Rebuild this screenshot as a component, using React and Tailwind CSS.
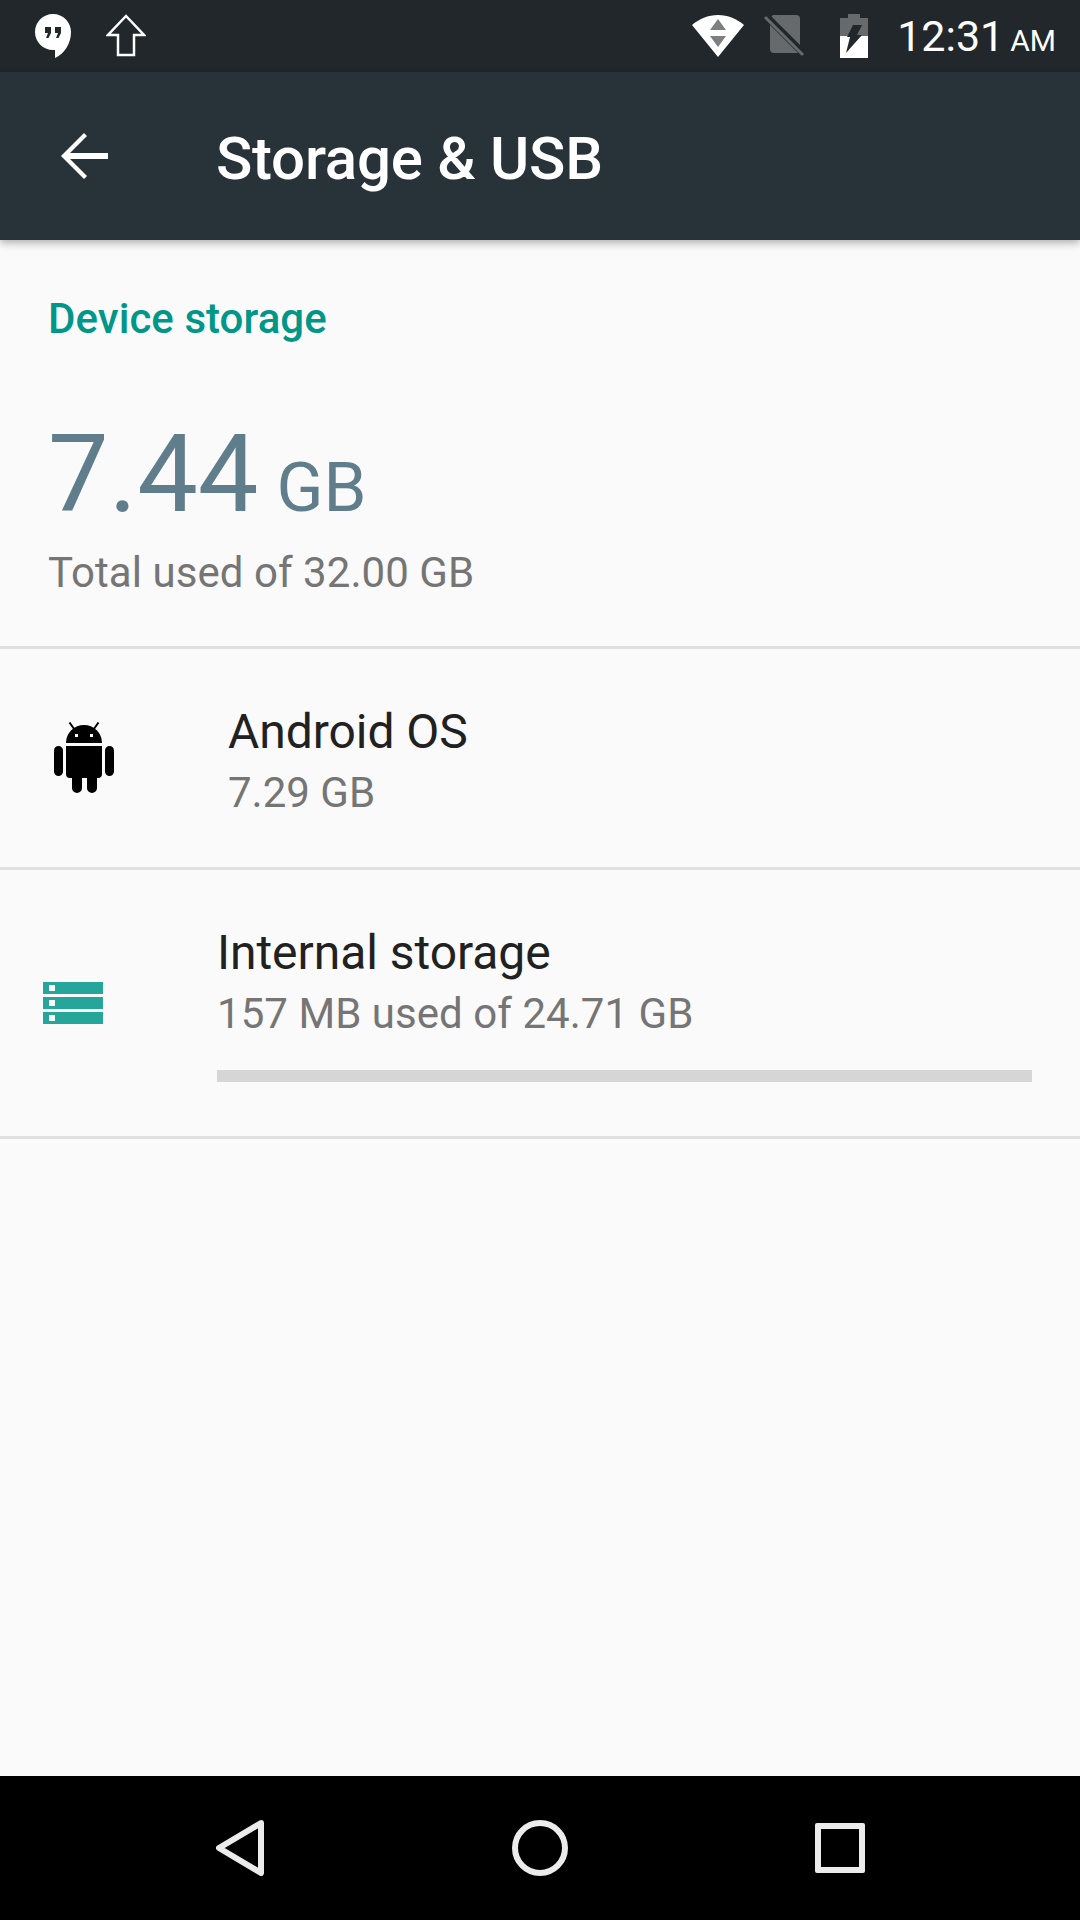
const HangoutsIcon = () => (
  <svg width="38" height="46" viewBox="0 0 38 46" className="ml-[34px]">
    <path d="M19 1C9 1 1 9 1 19s8 18 18 18h2v8c9-4 16-14 16-26C37 9 29 1 19 1z" fill="#fff" />
    <path d="M11 14h6v6l-2.500 5h-2.500l2-5h-3zM21 14h6v6l-2.500 5h-2.500l2-5h-3z" fill="#21272b" />
  </svg>
);

const UploadIcon = () => (
  <svg width="40" height="44" viewBox="0 0 40 44" className="ml-[34px]">
    <path d="M20 2L2 21h10v20h16V21h10z" fill="none" stroke="#fff" strokeWidth="2.500" />
  </svg>
);

const WifiIcon = () => (
  <svg width="54" height="44" viewBox="0 0 54 44">
    <path d="M27 43L1 11C8 5 17 1 27 1s19 4 26 10z" fill="#fff" />
    <path d="M27 5l-8 11h16zM19 22l8 11 8-11z" fill="#7d7f80" />
  </svg>
);

const NoSimIcon = () => (
  <svg width="42" height="44" viewBox="0 0 42 44">
    <path d="M10 1h23a4 4 0 0 1 4 4v34H11a4 4 0 0 1-4-4V4z" fill="#666a6c" />
    <path d="M3 2l38 38" stroke="#21272b" strokeWidth="7" />
    <path d="M2 3l38 38" stroke="#666a6c" strokeWidth="3" />
  </svg>
);

const BatteryIcon = () => (
  <svg width="30" height="44" viewBox="0 0 30 44">
    <path d="M9 0h12v4h8v22H1V4h8z" fill="#666a6c" />
    <path d="M1 22h28v22H1z" fill="#fff" />
    <path d="M14 11h9l-5 10h5L7 39l4-16H8z" fill="#21272b" />
  </svg>
);

const BackArrow = () => (
  <svg width="48" height="48" viewBox="0 0 48 48" className="ml-[60px] shrink-0">
    <path d="M48 21H10L27 4l-3-3L1 24l23 23 3-3L10 27h38z" fill="#fff" />
  </svg>
);

const AndroidIcon = () => (
  <svg width="60" height="72" viewBox="0 0 60 72" className="ml-[54px] shrink-0">
    <path d="M12 24h36v28a4 4 0 0 1-4 4h-1v10a5 5 0 0 1-10 0V56h-5v10a5 5 0 0 1-10 0V56h-2a4 4 0 0 1-4-4z" fill="#000" />
    <path d="M0 28.500a4.500 4.500 0 0 1 9 0v21a4.500 4.500 0 0 1-9 0zM51 28.500a4.500 4.500 0 0 1 9 0v21a4.500 4.500 0 0 1-9 0z" fill="#000" />
    <path d="M12 21a18 18 0 0 1 36 0z" fill="#000" />
    <path d="M15.500 0.500l5 7M44.500 0.500l-5 7" stroke="#000" strokeWidth="2" />
    <rect x="21" y="12" width="3" height="3" fill="#fff" />
    <rect x="36" y="12" width="3" height="3" fill="#fff" />
  </svg>
);

const StorageIcon = () => (
  <div className="ml-[43px] flex w-[60px] shrink-0 flex-col gap-[3px]">
    {[0, 1, 2].map((i) => (
      <div key={i} className="flex h-[12px] items-center bg-[#26a69a] pl-[6px]">
        <div className="h-[6px] w-[6px] bg-[#fafafa]" />
      </div>
    ))}
  </div>
);

const Divider = () => <div className="h-[3px] bg-[#e0e0e0]" />;

const App = () => {
  return (
    <div
      className="flex h-[1920px] w-[1080px] flex-col overflow-hidden bg-[#fafafa]"
      style={{ fontFamily: "Roboto, sans-serif" }}
    >
      <div className="flex h-[72px] shrink-0 items-center bg-[#21272b]">
        <HangoutsIcon />
        <UploadIcon />
        <div className="ml-auto flex items-center gap-[18px]">
          <WifiIcon />
          <NoSimIcon />
          <div className="ml-[16px]">
            <BatteryIcon />
          </div>
        </div>
        <div className="mr-[24px] ml-[28px] flex items-baseline text-white">
          <span className="text-[43px]">12:31</span>
          <span className="ml-[6px] text-[30px]">AM</span>
        </div>
      </div>

      <div className="relative z-10 flex h-[168px] shrink-0 items-center bg-[#283339] shadow-[0_3px_8px_rgba(0,0,0,0.3)]">
        <BackArrow />
        <h1 className="mt-[5px] ml-[108px] text-[60px] font-medium tracking-[-0.25px] text-white">Storage &amp; USB</h1>
      </div>

      <div className="flex h-[406px] shrink-0 flex-col pl-[48px]">
        <p className="mt-[54px] text-[42px] leading-[50px] font-medium tracking-[0.05px] text-[#009688]">Device storage</p>
        <div className="mt-[70px] flex items-baseline text-[#607d8b]">
          <span className="text-[108px] leading-[120px]">7.44</span>
          <span className="ml-[18px] text-[69px]">GB</span>
        </div>
        <p className="mt-[8px] text-[42px] leading-[50px] tracking-[0.05px] text-[#757575]">Total used of 32.00 GB</p>
      </div>
      <Divider />

      <div className="flex h-[218px] shrink-0 items-center">
        <AndroidIcon />
        <div className="ml-[114px] pt-[8px]">
          <p className="text-[48px] leading-[60px] tracking-[-0.05px] text-[#212121]">Android OS</p>
          <p className="mt-[2px] text-[42px] leading-[58px] text-[#757575]">7.29 GB</p>
        </div>
      </div>
      <Divider />

      <div className="flex h-[266px] shrink-0 items-center">
        <StorageIcon />
        <div className="ml-[114px] flex-1 pr-[48px] pb-[1px]">
          <p className="text-[48px] leading-[60px] tracking-[-0.05px] text-[#212121]">Internal storage</p>
          <p className="mt-[2px] text-[42px] leading-[58px] tracking-[0.05px] text-[#757575]">157 MB used of 24.71 GB</p>
          <div className="mt-[27px] h-[12px] bg-[#d6d6d6]" />
        </div>
      </div>
      <Divider />

      <div className="flex-1" />

      <div className="flex h-[144px] shrink-0 items-center bg-black">
        <div className="flex w-full items-center justify-center">
          <svg width="48" height="56" viewBox="0 0 48 56" className="ml-[216px]">
            <path d="M45 3L3 28l42 25z" fill="none" stroke="#ececec" strokeWidth="6" strokeLinejoin="round" />
          </svg>
          <div className="ml-[248px] h-[56px] w-[56px] rounded-full border-[6px] border-[#ececec]" />
          <div className="mr-[215px] ml-auto h-[50px] w-[50px] rounded-[2px] border-[6px] border-[#ececec]" />
        </div>
      </div>
    </div>
  );
};

export default App;
